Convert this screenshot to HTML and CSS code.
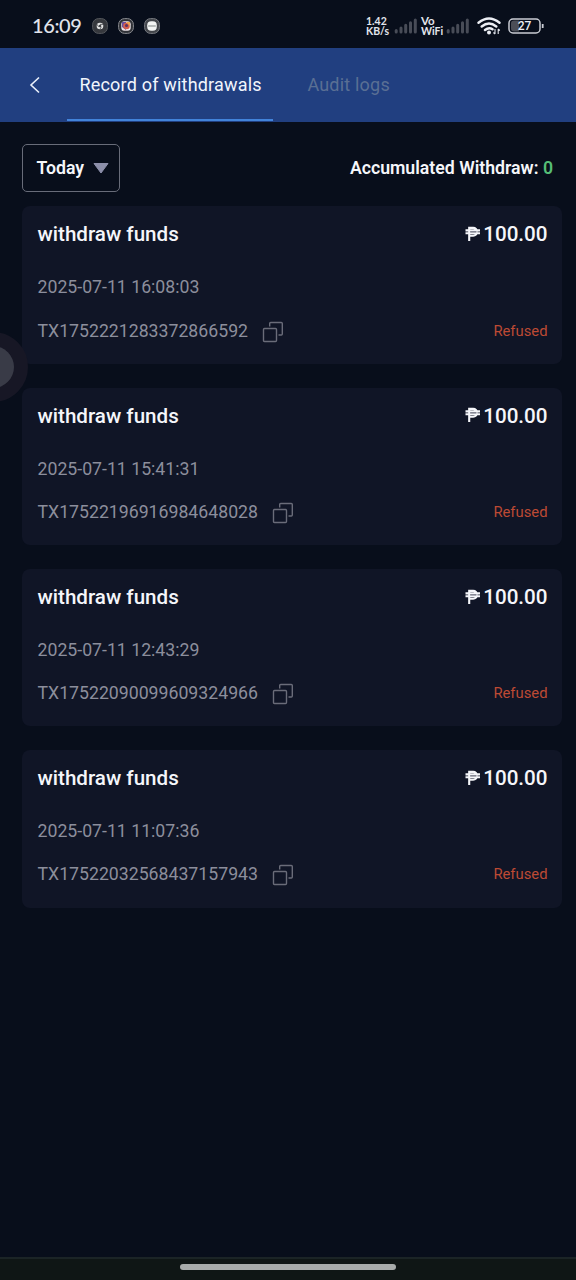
FILE: index.html
```
<!DOCTYPE html>
<html lang="en">
<head>
<meta charset="utf-8">
<title>Record of withdrawals</title>
<link rel="stylesheet" href="styles.css">
</head>
<body>
<svg class="defs" width="0" height="0">
  <symbol id="copy" viewBox="0 0 22 22"><path d="M7.700 5.500V2.500Q7.700 1.500 8.700 1.500H19.300Q20.300 1.500 20.300 2.500V13Q20.300 14 19.300 14H16.500M2.500 7.500H13.500Q14.500 7.500 14.500 8.500V19.500Q14.500 20.500 13.500 20.500H2.500Q1.500 20.500 1.500 19.500V8.500Q1.500 7.500 2.500 7.500Z" fill="none" stroke="#6a6c79" stroke-width="1.400" stroke-linejoin="round"/></symbol>
  <symbol id="bars" viewBox="0 0 24 16"><path d="M2.200 12.500v1.500M7 10v4M11.700 7.300v6.700M16.500 4.700v9.300M21.300 2v12" fill="none" stroke="#484c57" stroke-width="3" stroke-linecap="round"/></symbol>
  <symbol id="peso" viewBox="0 0 16 16"><path d="M4.200 15V1.900H8.200A3.900 3.900 0 0 1 8.200 9.700H4.200M.5 4.400H15M.5 7.300H15" fill="none" stroke="#f5f6fa" stroke-width="2.100"/><path d="M5 5.850H13" stroke="#8a8d99" stroke-width=".8"/></symbol>
</svg>
<header class="status">
  <span class="clock">16:09</span>
  <div class="notices">
    <svg viewBox="0 0 16 16"><rect x=".6" y=".6" width="14.800" height="14.800" rx="6" fill="#36383d" stroke="#55585d"/><circle cx="8" cy="8" r="3.300" fill="#e6e6e6"/><circle cx="8" cy="8" r="1.300" fill="#45474b"/><path d="M8 6.400h3M6.600 8.900 5 6.200M9.300 8.900 7.900 11.300" stroke="#45474b" stroke-width=".8"/></svg>
    <svg viewBox="0 0 16 16"><rect x=".6" y=".6" width="14.800" height="14.800" rx="6" fill="#303237" stroke="#898b90"/><rect x="3.300" y="3.300" width="9.400" height="9.400" rx="3" fill="#eee5e8"/><path d="M4 4h4v8L4 9Z" fill="#684fa0"/><circle cx="8.500" cy="8" r="3.300" fill="#d65e4b"/><path d="M8 4h4v4Z" fill="#eda84f"/><circle cx="8.500" cy="7.500" r="1.500" fill="#583365"/></svg>
    <svg viewBox="0 0 16 16"><rect x=".6" y=".6" width="14.800" height="14.800" rx="6" fill="#42454a" stroke="#777a80"/><rect x="3.200" y="3.200" width="9.600" height="9.600" rx="4" fill="#f2f4f3"/><path d="M4.200 8h7.600" stroke="#a4aaa8" stroke-width="1.500"/></svg>
  </div>
  <div class="system">
    <span class="mini speed"><span>1.42</span><span>KB/s</span></span>
    <svg class="signal"><use href="#bars"/></svg>
    <span class="mini vowifi"><span class="vo">Vo</span><span>WiFi</span></span>
    <svg class="signal"><use href="#bars"/></svg>
    <svg class="wifi" viewBox="0 0 24 18"><g fill="none" stroke="#eceef4" stroke-width="2.400" stroke-linecap="round"><path d="M1.500 5.800Q12-2.800 22.500 5.800M4.700 9.500Q12 3.600 19.300 9.500M8 13Q12 9.700 15.500 12.300"/></g><circle cx="12" cy="15.500" r="2" fill="#eceef4"/><path d="M18 12v5M16.400 15.500 18 17M21.200 17v-5M22.800 13.500 21.200 12" fill="none" stroke="#dfe2e9" stroke-width="1.100"/></svg>
    <svg class="battery" viewBox="0 0 36 16"><path d="M6 2.500h5v11H6a3 3 0 0 1-3-3v-5a3 3 0 0 1 3-3Z" fill="#4b4e57"/><rect x="1" y="1" width="31" height="14" rx="4" fill="none" stroke="#c9ccd4" stroke-width="1.500"/><path d="M34.700 6v4" stroke="#c9ccd4" stroke-width="1.800"/><text x="16.500" y="12.400" text-anchor="middle">27</text></svg>
  </div>
</header>
<nav class="tabs">
  <svg class="back" viewBox="0 0 12 18"><path d="M10 1.500 2 9l8 7.500" fill="none" stroke="#eaf1fb" stroke-width="1.600"/></svg>
  <span class="tab active">Record of withdrawals</span>
  <span class="tab">Audit logs</span>
</nav>
<main>
  <div class="filter">
    <div class="select"><span>Today</span><svg viewBox="0 0 16 11"><path d="M1 .5H15L8 10Z" fill="#8c8faa" stroke="#8c8faa" stroke-linejoin="round"/></svg></div>
    <div class="total">Accumulated Withdraw: <b>0</b></div>
  </div>
  <section class="list">
    <article class="card">
      <div class="row title"><span>withdraw funds</span><span class="amount"><svg><use href="#peso"/></svg>100.00</span></div>
      <div class="date">2025-07-11 16:08:03</div>
      <div class="row ref"><span class="tx">TX1752221283372866592</span><svg class="copy"><use href="#copy"/></svg><span class="state">Refused</span></div>
    </article>
    <article class="card">
      <div class="row title"><span>withdraw funds</span><span class="amount"><svg><use href="#peso"/></svg>100.00</span></div>
      <div class="date">2025-07-11 15:41:31</div>
      <div class="row ref"><span class="tx">TX17522196916984648028</span><svg class="copy"><use href="#copy"/></svg><span class="state">Refused</span></div>
    </article>
    <article class="card">
      <div class="row title"><span>withdraw funds</span><span class="amount"><svg><use href="#peso"/></svg>100.00</span></div>
      <div class="date">2025-07-11 12:43:29</div>
      <div class="row ref"><span class="tx">TX17522090099609324966</span><svg class="copy"><use href="#copy"/></svg><span class="state">Refused</span></div>
    </article>
    <article class="card">
      <div class="row title"><span>withdraw funds</span><span class="amount"><svg><use href="#peso"/></svg>100.00</span></div>
      <div class="date">2025-07-11 11:07:36</div>
      <div class="row ref"><span class="tx">TX17522032568437157943</span><svg class="copy"><use href="#copy"/></svg><span class="state">Refused</span></div>
    </article>
  </section>
</main>
<footer class="home"><span></span></footer>
<div class="assist"></div>
</body>
</html>
```
FILE: styles.css
```
* { box-sizing: border-box; }
body {
  margin: 0;
  height: 1280px;
  overflow: hidden;
  position: relative;
  display: flex;
  flex-direction: column;
  background: #080e1b;
  color: #f5f6fa;
  font-family: Roboto, sans-serif;
}
svg { display: block; flex: none; }
.defs { position: absolute; }
.status { height: 48px; flex: none; display: flex; align-items: center; padding: 3px 32px 0; }
.clock { width: 60px; font: 500 20px/24px Lato, sans-serif; color: #e0e3eb; letter-spacing: -.4px; padding-bottom: 2px; }
.notices { display: flex; gap: 10px; }
.notices svg { width: 16px; height: 16px; }
.system { margin-left: auto; display: flex; align-items: center; }
.mini { display: flex; flex-direction: column; font: 700 10.500px/10px Lato, sans-serif; color: #e3e5ec; }
.vo { font-size: 11.500px; line-height: 11px; }
.speed { width: 28px; }
.vowifi { width: 25px; margin-left: 3px; margin-top: -1px; }
.signal { width: 24px; height: 16px; }
.wifi { width: 24px; height: 18px; margin-left: 7px; }
.battery { width: 36px; height: 16px; margin-left: 7px; }
.battery text { font: 500 12px Roboto, sans-serif; fill: #eceef4; }
.tabs { height: 74px; flex: none; display: flex; background: #213f80; padding-left: 29px; }
.back { width: 12px; height: 18px; margin: 28px 26.400px 0 0; }
.tab { height: 73px; line-height: 74px; padding: 0 12px; margin-right: 22px; font-size: 18px; letter-spacing: .2px; color: #5a6f94; white-space: nowrap; }
.active { width: 206px; color: #f1f5fc; border-bottom: 2px solid #4283da; }
main { flex: 1; padding: 22px 14px 0 22px; }
.filter { height: 48px; display: flex; justify-content: space-between; padding-right: 9px; font-weight: 600; font-size: 17.700px; line-height: 48px; }
.select { width: 98px; height: 48px; margin-left: .4px; display: flex; align-items: center; border: 1.500px solid #686c79; border-radius: 5px; padding: 0 10px 1px 13px; justify-content: space-between; }
.select svg { width: 16px; height: 11px; margin-top: 1px; }
.total b { color: #56bd76; font-weight: 600; }
.list { margin-top: 14.400px; display: flex; flex-direction: column; gap: 24px; }
.card { height: 157.300px; background: #101526; border-radius: 8px; padding: 15.600px 14.500px 0 15.500px; }
.row { display: flex; align-items: center; }
.title { height: 25px; justify-content: space-between; font-size: 20.600px; font-weight: 500; }
.amount { display: flex; align-items: center; gap: 2px; }
.amount svg { width: 16px; height: 16px; margin-top: -1px; }
.date { margin-top: 27.300px; line-height: 26px; font-size: 17.700px; color: #8c8e9c; }
.ref { margin-top: 17.300px; height: 26px; font-size: 17.700px; color: #8c8e9c; }
.copy { width: 22px; height: 22px; margin: 2px 0 0 14.300px; }
.state { margin-left: auto; color: #bd4a34; font-size: 14.800px; }
.home { height: 23px; flex: none; background: #0f1615; border-top: 2px solid #1b2426; display: flex; justify-content: center; padding-top: 5px; }
.home span { width: 216px; height: 6px; border-radius: 3px; background: #a8acab; }
.assist { position: absolute; left: -42px; top: 332px; width: 70px; height: 70px; border-radius: 50%; background: #171725; border: 14px solid #171725; }
.assist::before { content: ""; display: block; width: 42px; height: 42px; border-radius: 50%; background: #393b47; }
```
